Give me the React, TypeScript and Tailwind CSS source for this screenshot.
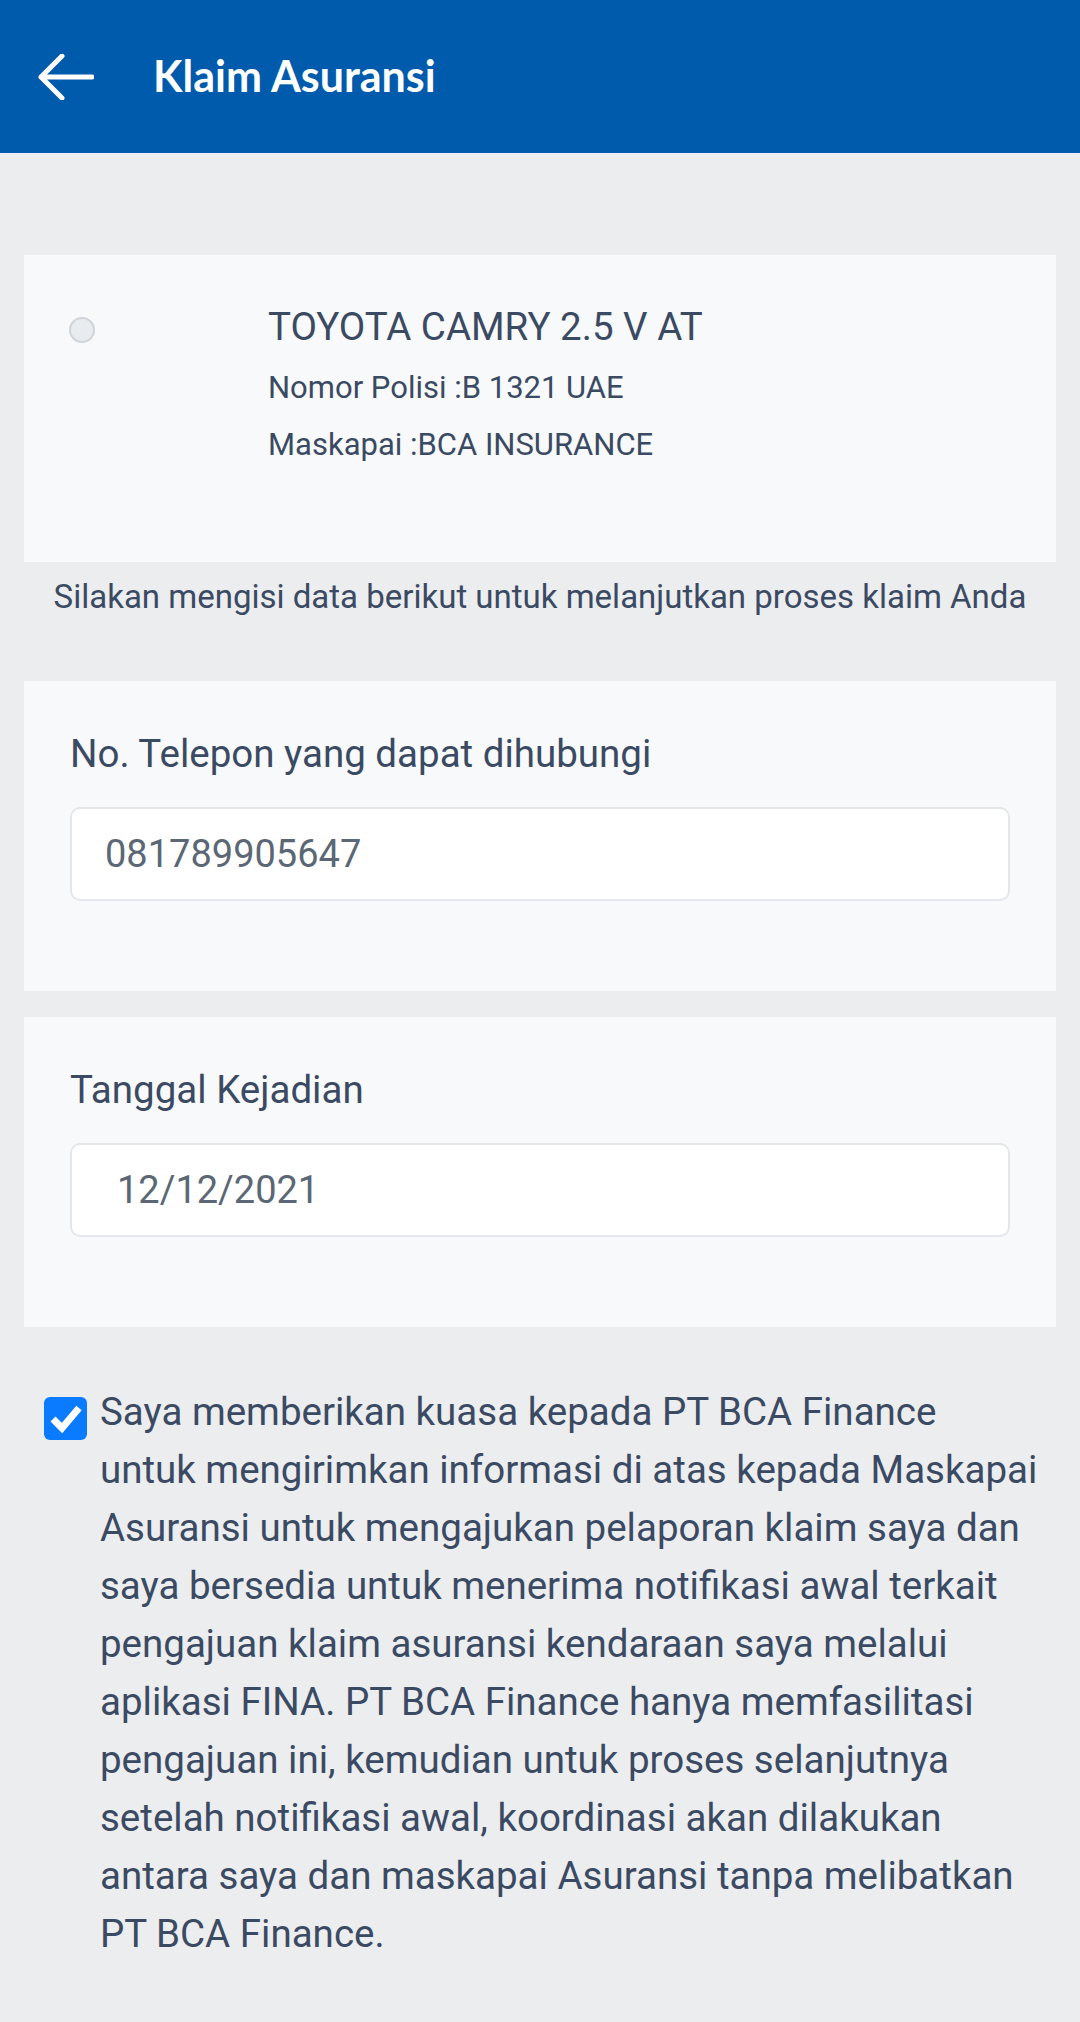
import React from 'react'

// ── Consent text, one entry per rendered line ───────────────────────────────
const CONSENT_LINES = [
  'Saya memberikan kuasa kepada PT BCA Finance',
  'untuk mengirimkan informasi di atas kepada Maskapai',
  'Asuransi untuk mengajukan pelaporan klaim saya dan',
  'saya bersedia untuk menerima notifikasi awal terkait',
  'pengajuan klaim asuransi kendaraan saya melalui',
  'aplikasi FINA. PT BCA Finance hanya memfasilitasi',
  'pengajuan ini, kemudian untuk proses selanjutnya',
  'setelah notifikasi awal, koordinasi akan dilakukan',
  'antara saya dan maskapai Asuransi tanpa melibatkan',
  'PT BCA Finance.',
]

function BackArrow() {
  return (
    <svg width="56" height="46" viewBox="0 0 56 46" fill="none">
      <path
        d="M24 2 L3 23 L24 44 M3 23 H54"
        stroke="#ffffff"
        strokeWidth="5"
        strokeLinecap="round"
        strokeLinejoin="round"
      />
    </svg>
  )
}

function Field({ label, value, inset }: { label: string; value: string; inset: string }) {
  return (
    <div className="h-[310px] bg-[#F8F9FA] px-[46px] pt-[51px]">
      <label className="block text-[38.5px] leading-[44px] text-[#3B4A63]">{label}</label>
      <input
        type="text"
        readOnly
        value={value}
        className={`mt-[31px] h-[94px] w-full rounded-[10px] border-2 border-[#E3E6EA] bg-white ${inset} text-[38px] text-[#5B6775] outline-none`}
      />
    </div>
  )
}

export default function App() {
  return (
    <div className="min-h-[2022px] bg-[#ECEDEF] font-['Roboto',sans-serif]">
      {/* Header */}
      <header className="flex h-[153px] items-center bg-[#005BAC] pl-[38px]">
        <BackArrow />
        <h1 className="ml-[59px] font-['Lato',sans-serif] text-[43px] font-bold text-white">
          Klaim Asuransi
        </h1>
      </header>

      <main className="px-[24px] pt-[102px]">
        {/* Vehicle card */}
        <div className="flex h-[307px] bg-[#F8F9FA] pl-[45px] pt-[51px]">
          <span className="mt-[11px] h-[26px] w-[26px] shrink-0 rounded-full border-2 border-[#CED4DA] bg-[#E9ECEF]" />
          <div className="ml-[173px] text-[#3B4A63]">
            <p className="text-[38.5px] leading-[42px]">TOYOTA CAMRY 2.5 V AT</p>
            <p className="mt-[20px] text-[31px] leading-[40px]">Nomor Polisi :B 1321 UAE</p>
            <p className="mt-[17px] text-[31px] leading-[40px]">Maskapai :BCA INSURANCE</p>
          </div>
        </div>

        <p className="mt-[15px] text-center text-[33px] leading-[40px] text-[#3B4A63]">
          Silakan mengisi data berikut untuk melanjutkan proses klaim Anda
        </p>

        <div className="mt-[64px] flex flex-col gap-[26px]">
          <Field label="No. Telepon yang dapat dihubungi" value="081789905647" inset="px-[33px]" />
          <Field label="Tanggal Kejadian" value="12/12/2021" inset="px-[45px]" />
        </div>

        {/* Consent */}
        <div className="mt-[56px] flex">
          <svg className="mt-[14px] ml-[20px] shrink-0" width="43" height="43" viewBox="0 0 43 43">
            <rect width="43" height="43" rx="6" fill="#0A7BFF" />
            <path
              d="M9 22 L18 31 L35 11"
              stroke="#ffffff"
              strokeWidth="7"
              fill="none"
              strokeLinejoin="miter"
            />
          </svg>
          <p className="ml-[13px] text-[38.5px] leading-[58px] text-[#3B4A63]">
            {CONSENT_LINES.map((line) => (
              <span key={line} className="block whitespace-nowrap">
                {line}
              </span>
            ))}
          </p>
        </div>
      </main>
    </div>
  )
}
